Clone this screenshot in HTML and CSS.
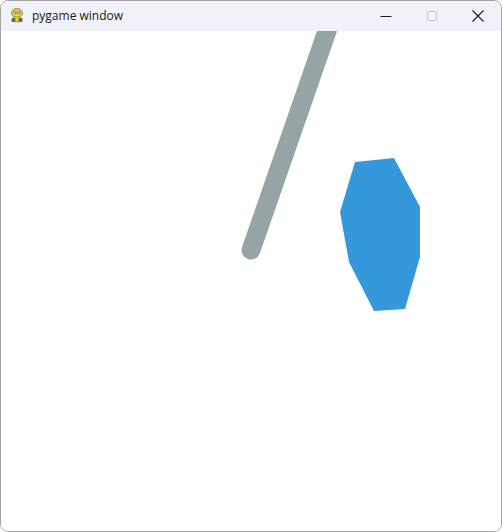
FILE: index.html
```html
<!DOCTYPE html>
<html>
<head>
<meta charset="utf-8">
<link rel="stylesheet" href="styles.css">
</head>
<body>
<div class="window">
  <div class="titlebar">
    <div class="app">
      <svg class="appicon" width="16" height="16" viewBox="0 0 16 16">
        <ellipse cx="8" cy="5" rx="5.5" ry="4.5" fill="#f5d63a" stroke="#8a7a20" stroke-width="0.8"/>
        <circle cx="6" cy="4.5" r="1.6" fill="#fff" stroke="#555" stroke-width="0.6"/>
        <circle cx="10" cy="4.5" r="1.6" fill="#fff" stroke="#555" stroke-width="0.6"/>
        <circle cx="6.2" cy="4.6" r="0.6" fill="#222"/>
        <circle cx="10.2" cy="4.6" r="0.6" fill="#222"/>
        <rect x="4" y="9" width="8" height="5" rx="2" fill="#f2d23a" stroke="#8a7a20" stroke-width="0.6"/>
        <rect x="2.5" y="10" width="4" height="4" rx="1" fill="#666"/>
        <rect x="9.5" y="10" width="4" height="4" rx="1" fill="#666"/>
      </svg>
      <span class="title">pygame window</span>
    </div>
    <div class="controls">
      <div class="ctl">
        <svg width="14" height="14" viewBox="0 0 14 14"><path d="M1.5 7.5h11" stroke="#1a1a1a" stroke-width="1"/></svg>
      </div>
      <div class="ctl">
        <svg width="14" height="14" viewBox="0 0 14 14"><rect x="2.5" y="2.5" width="9" height="9" rx="1" fill="none" stroke="#c2c4c8" stroke-width="1"/></svg>
      </div>
      <div class="ctl">
        <svg width="14" height="14" viewBox="0 0 14 14"><path d="M1.5 1.5L12.5 12.5M12.5 1.5L1.5 12.5" stroke="#1a1a1a" stroke-width="1.1"/></svg>
      </div>
    </div>
  </div>
  <div class="canvas">
    <svg width="500" height="500" viewBox="0 0 500 500">
      <line x1="250" y1="219" x2="333" y2="-20" stroke="#95a5a6" stroke-width="19" stroke-linecap="round"/>
      <polygon points="354,131 393,127 419,176 419,226 404,278 373,280 348,231 339,181" fill="#3498db"/>
    </svg>
  </div>
</div>
</body>
</html>
```
FILE: styles.css
```css
html, body {
  margin: 0;
  padding: 0;
  background: #ffffff;
}
.window {
  width: 500px;
  height: 530px;
  border: 1px solid #a4a4a4;
  border-radius: 8px;
  overflow: hidden;
  display: flex;
  flex-direction: column;
  background: #ffffff;
}
.titlebar {
  height: 30px;
  background: #eff3f9;
  display: flex;
  align-items: center;
  justify-content: space-between;
}
.app {
  display: flex;
  align-items: center;
  padding-left: 8px;
  gap: 7px;
}
.appicon {
  display: block;
}
.title {
  font-family: "Open Sans", "Noto Sans", sans-serif;
  font-size: 12px;
  color: #1a1a1a;
  line-height: 16px;
}
.controls {
  display: flex;
  height: 30px;
}
.ctl {
  width: 46px;
  height: 30px;
  display: flex;
  align-items: center;
  justify-content: center;
}
.canvas {
  width: 500px;
  height: 500px;
  overflow: hidden;
  background: #ffffff;
}
.canvas svg {
  display: block;
}
```
